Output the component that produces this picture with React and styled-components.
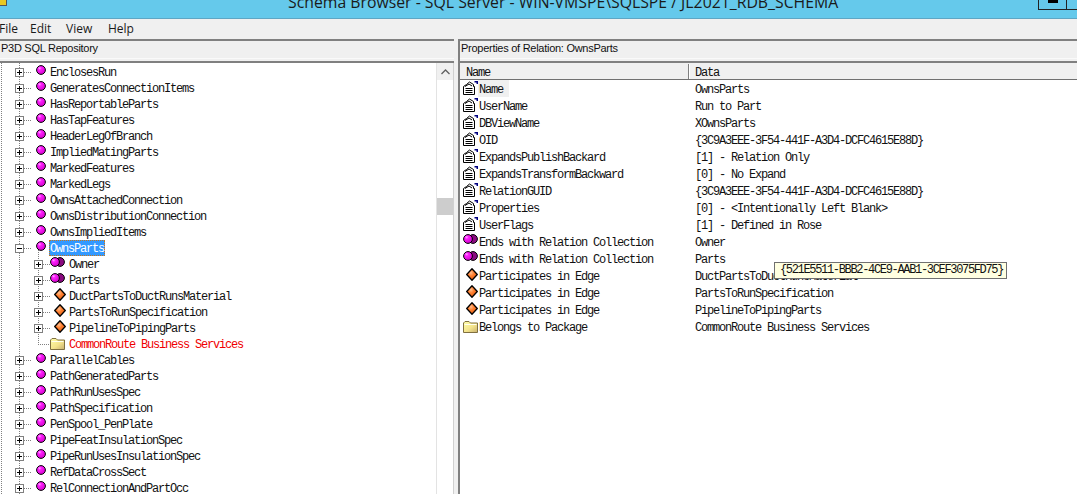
import styled, { createGlobalStyle } from 'styled-components'

const GlobalStyle = createGlobalStyle`
  html, body {
    margin: 0;
    padding: 0;
    background: #fff;
    overflow: hidden;
  }
`

const dotted = (x, height = '100%') =>
  `repeating-linear-gradient(#808080 0 1px, transparent 1px 2px) ${x}px 0 / 1px ${height} no-repeat`

const Window = styled.div`
  width: 1077px;
  height: 494px;
  display: flex;
  flex-direction: column;
  overflow: hidden;
  background: #f0f0f0;
  position: relative;
`
const TitleBar = styled.div`
  height: 18px;
  flex: none;
  background: #65c9eb;
  border-bottom: 1px solid #5fa6c4;
  display: flex;
  align-items: flex-start;
  overflow: hidden;
`
const AppIcon = styled.div`
  width: 6px;
  height: 5px;
  flex: none;
  background: #e8c820;
  border: 1px solid #555;
  border-left: none;
  border-top: none;
`
const Title = styled.div`
  margin: -8px 0 0 281px;
  font: 15.8px/20px "Open Sans", "Noto Sans", sans-serif;
  color: #1a1a1a;
  white-space: nowrap;
`
const WindowButtons = styled.div`
  display: flex;
  flex: none;
  margin-left: auto;
  height: 9px;
  border-left: 1px solid #222;
  border-bottom: 1px solid #222;
`
const WindowButton = styled.div`
  width: ${p => p.$w}px;
  box-sizing: border-box;
  border-right: ${p => (p.$last ? 'none' : '1px solid #222')};
  display: flex;
  justify-content: center;
  align-items: flex-start;
`
const MinimizeBar = styled.div`
  width: 10px;
  height: 3px;
  background: #000;
`
const MenuBar = styled.div`
  height: 20px;
  flex: none;
  display: flex;
  align-items: center;
  margin-left: -1px;
  font: 12px/20px "Open Sans", "Noto Sans", sans-serif;
  color: #1a1a1a;
`
const MenuItem = styled.span`
  width: ${p => p.$w}px;
  flex: none;
`
const Split = styled.div`
  flex: 1;
  min-height: 0;
  display: flex;
`
const Pane = styled.div`
  width: ${p => p.$w}px;
  flex: ${p => (p.$w ? 'none' : '1')};
  min-width: 0;
  display: flex;
  flex-direction: column;
  border-left: ${p => (p.$w ? 'none' : '2px solid #808080')};
`
const PaneCaption = styled.div`
  height: 17px;
  flex: none;
  border-top: 2px solid #808080;
  border-bottom: 1px solid #fafafa;
  font: 11px/15px "Liberation Sans", Arial, sans-serif;
  letter-spacing: -0.27px;
  color: #111;
  padding-left: 1px;
  white-space: nowrap;
  overflow: hidden;
`
const PaneBody = styled.div`
  flex: 1;
  min-height: 0;
  margin-top: 2px;
  border-top: 2px solid #808080;
  background: #fff;
  display: flex;
  overflow: hidden;
`
const Tree = styled.div`
  flex: 1;
  min-width: 0;
  padding-top: 1px;
  background: ${dotted(1)}, ${dotted(19)}, #fff;
  overflow: hidden;
`
const Mono = styled.span`
  height: 16px;
  font: 12px/18px "Liberation Mono", "DejaVu Sans Mono", monospace;
  letter-spacing: -1.2px;
  white-space: nowrap;
`
const Row = styled.div`
  height: 16px;
  display: flex;
  align-items: center;
  padding-left: ${p => (p.$level ? 34 : 15)}px;
  color: #111;
`
const Box = styled.div`
  width: 9px;
  height: 9px;
  flex: none;
  box-sizing: border-box;
  border: 1px solid #808080;
  background: #fff;
  position: relative;
  &::before {
    content: "";
    position: absolute;
    left: 1px;
    top: 3px;
    width: 5px;
    height: 1px;
    background: #000;
  }
  &::after {
    content: "";
    display: ${p => (p.$open ? 'none' : 'block')};
    position: absolute;
    left: 3px;
    top: 1px;
    width: 1px;
    height: 5px;
    background: #000;
  }
`
const Stub = styled.div`
  width: ${p => p.$w}px;
  margin-left: ${p => p.$skip || 0}px;
  height: 1px;
  flex: none;
  background: repeating-linear-gradient(90deg, #808080 0 1px, transparent 1px 2px);
`
const IconSlot = styled.div`
  width: ${p => p.$w}px;
  height: 16px;
  flex: none;
  box-sizing: border-box;
  padding-top: ${p => p.$top || 0}px;
  display: flex;
  align-items: flex-start;
  justify-content: ${p => p.$align || 'center'};
  svg { display: block; }
`
const Label = styled(Mono)`
  margin-left: 1px;
  color: ${p => (p.$red ? '#f00000' : 'inherit')};
  ${p => p.$selected && `
    margin-left: 0;
    padding: 0 1px;
    background: #3399ff;
    color: #fff;
    outline: 1px dotted #c8761a;
    outline-offset: -1px;
  `}
`
const Children = styled.div`
  margin-top: -8px;
  padding-top: 8px;
  background: ${dotted(38, 'calc(100% - 8px)')};
`
const ScrollBar = styled.div`
  width: 16px;
  flex: none;
  border-left: 1px solid #e3e3e3;
  border-right: 1px solid #d0d0d0;
  background: #fff;
  display: flex;
  flex-direction: column;
`
const ScrollArrow = styled.div`
  height: 17px;
  flex: none;
  background: #f0f0f0;
  display: flex;
  justify-content: center;
  align-items: center;
`
const ScrollThumb = styled.div`
  height: 17px;
  flex: none;
  margin-top: 118px;
  background: #cdcdcd;
`
const Divider = styled.div`
  width: 4px;
  flex: none;
`
const List = styled.div`
  flex: 1;
  min-width: 0;
  display: flex;
  flex-direction: column;
  background: #fff;
`
const ListHead = styled.div`
  height: 15px;
  flex: none;
  display: flex;
  background: #f0f0f0;
  border-bottom: 1px solid #707070;
  padding: 1px 0 0 2px;
`
const HeadCell = styled(Mono)`
  width: ${p => p.$w}px;
  height: 15px;
  flex: none;
  box-sizing: border-box;
  padding-left: ${p => p.$pad}px;
  color: #111;
  ${p => p.$rule && 'border-left: 1px solid #808080; box-shadow: inset 1px 0 0 #fff;'}
`
const PropRow = styled.div`
  height: 17px;
  display: flex;
  align-items: center;
  padding-left: 2px;
  color: #111;
`
const PropName = styled(Mono)`
  width: 217px;
  height: 17px;
  flex: none;
`
const PropNameText = styled.span`
  display: inline-block;
  height: 17px;
  line-height: 20px;
  background: ${p => (p.$hot ? '#f0f0f0' : 'transparent')};
  padding-right: ${p => (p.$hot ? 6 : 0)}px;
  padding-left: 1px;
`
const PropData = styled(Mono)`
  flex: 1;
  height: 17px;
  line-height: 20px;
`
const Tooltip = styled.div`
  position: absolute;
  left: 774px;
  top: 262px;
  height: 15px;
  padding: 0 3px 0 5px;
  border: 1px solid #707070;
  background: #ffffe1;
  font: 12px/15px "Liberation Mono", monospace;
  letter-spacing: -1.33px;
  color: #111;
  white-space: nowrap;
`

const Sphere = ({ id, cx = 5, cy = 5 }) => (
  <>
    <radialGradient id={id} cx="35%" cy="30%" r="75%">
      <stop offset="0" stopColor="#ffb0ff" />
      <stop offset="0.25" stopColor="#ff20ff" />
      <stop offset="1" stopColor="#d000c8" />
    </radialGradient>
    <circle cx={cx} cy={cy} r="4.4" fill={`url(#${id})`} stroke="#000" strokeWidth="1" />
  </>
)

const BallIcon = ({ id }) => (
  <svg width="10" height="10" viewBox="0 0 10 10">
    <Sphere id={id} />
  </svg>
)

const PairIcon = ({ id }) => (
  <svg width="15" height="10" viewBox="0 0 15 10">
    <circle cx="10" cy="5" r="4.4" fill="#8a0a80" stroke="#000" />
    <Sphere id={id} />
  </svg>
)

const EdgeIcon = ({ id }) => (
  <svg width="12" height="13" viewBox="0 0 12 13">
    <radialGradient id={id} cx="40%" cy="35%" r="70%">
      <stop offset="0" stopColor="#ffc090" />
      <stop offset="0.4" stopColor="#ff8030" />
      <stop offset="1" stopColor="#e05810" />
    </radialGradient>
    <path d="M6 .8 11.300 6.500 6 12.200.7 6.500Z" fill={`url(#${id})`} stroke="#000" strokeWidth="1.300" strokeLinejoin="round" />
  </svg>
)

const FolderIcon = ({ id }) => (
  <svg width="15" height="12" viewBox="0 0 15 12">
    <linearGradient id={id} x1="0" y1="0" x2="1" y2="1">
      <stop offset="0" stopColor="#ffffa8" />
      <stop offset="0.55" stopColor="#f4e48c" />
      <stop offset="1" stopColor="#c8b070" />
    </linearGradient>
    <path d="M.5 11.500V2L2 .5h4L7.500 2h7v9.500Z" fill={`url(#${id})`} stroke="#807040" />
    <path d="M1.500 3.500h12" stroke="#fffff0" />
  </svg>
)

const SheetIcon = () => (
  <svg width="16" height="14" viewBox="0 0 16 14">
    <path d="M1.500 13.500v-8l3-2 3-2.500 4 2.500v2h1v8Z" fill="#fff" stroke="#000" />
    <path d="M3 5.500 7 3l3 2M3.500 7.500h7M3.500 9.500h7M3.500 11.500h7" fill="none" stroke="#000" />
    <path d="M12.500 0H16v3h-1.500V1.500h-2Z" fill="#000080" />
  </svg>
)

const topNodes = [
  'EnclosesRun', 'GeneratesConnectionItems', 'HasReportableParts', 'HasTapFeatures',
  'HeaderLegOfBranch', 'ImpliedMatingParts', 'MarkedFeatures', 'MarkedLegs',
  'OwnsAttachedConnection', 'OwnsDistributionConnection', 'OwnsImpliedItems',
]
const bottomNodes = [
  'ParallelCables', 'PathGeneratedParts', 'PathRunUsesSpec', 'PathSpecification',
  'PenSpool_PenPlate', 'PipeFeatInsulationSpec', 'PipeRunUsesInsulationSpec',
  'RefDataCrossSect', 'RelConnectionAndPartOcc',
]
const edges = ['DuctPartsToDuctRunsMaterial', 'PartsToRunSpecification', 'PipelineToPipingParts']

const properties = [
  ['sheet', 'Name', 'OwnsParts'],
  ['sheet', 'UserName', 'Run to Part'],
  ['sheet', 'DBViewName', 'XOwnsParts'],
  ['sheet', 'OID', '{3C9A3EEE-3F54-441F-A3D4-DCFC4615E88D}'],
  ['sheet', 'ExpandsPublishBackard', '[1] - Relation Only'],
  ['sheet', 'ExpandsTransformBackward', '[0] - No Expand'],
  ['sheet', 'RelationGUID', '{3C9A3EEE-3F54-441F-A3D4-DCFC4615E88D}'],
  ['sheet', 'Properties', '[0] - <Intentionally Left Blank>'],
  ['sheet', 'UserFlags', '[1] - Defined in Rose'],
  ['pair', 'Ends with Relation Collection', 'Owner'],
  ['pair', 'Ends with Relation Collection', 'Parts'],
  ['edge', 'Participates in Edge', 'DuctPartsToDuctRunsMaterial'],
  ['edge', 'Participates in Edge', 'PartsToRunSpecification'],
  ['edge', 'Participates in Edge', 'PipelineToPipingParts'],
  ['folder', 'Belongs to Package', 'CommonRoute Business Services'],
]

const TopRow = ({ name, id }) => (
  <Row>
    <Box />
    <Stub $w={8} />
    <IconSlot $w={17} $top={1}><BallIcon id={id} /></IconSlot>
    <Label>{name}</Label>
  </Row>
)

const PropIcon = ({ kind, id }) => {
  if (kind === 'pair') return <IconSlot $w={16}><PairIcon id={id} /></IconSlot>
  if (kind === 'edge') return <IconSlot $w={16} $align="flex-end"><EdgeIcon id={id} /></IconSlot>
  if (kind === 'folder') return <IconSlot $w={16} $align="flex-end" $top={2}><FolderIcon id={id} /></IconSlot>
  return <IconSlot $w={16}><SheetIcon /></IconSlot>
}

const App = () => (
  <Window>
    <GlobalStyle />
    <TitleBar>
      <AppIcon />
      <Title>Schema Browser - SQL Server - WIN-VMSPE\SQLSPE / JL2021_RDB_SCHEMA</Title>
      <WindowButtons>
        <WindowButton $w={28}><MinimizeBar /></WindowButton>
        <WindowButton $w={10} $last />
      </WindowButtons>
    </TitleBar>
    <MenuBar>
      <MenuItem $w={31}>File</MenuItem>
      <MenuItem $w={36}>Edit</MenuItem>
      <MenuItem $w={42}>View</MenuItem>
      <MenuItem $w={30}>Help</MenuItem>
    </MenuBar>
    <Split>
      <Pane $w={454}>
        <PaneCaption>P3D SQL Repository</PaneCaption>
        <PaneBody>
          <Tree>
            {topNodes.map((name, i) => <TopRow key={name} name={name} id={`top${i}`} />)}
            <Row>
              <Box $open />
              <Stub $w={8} />
              <IconSlot $w={17} $top={1}><BallIcon id="open" /></IconSlot>
              <Label $selected>OwnsParts</Label>
            </Row>
            <Children>
              {['Owner', 'Parts'].map(name => (
                <Row key={name} $level={1}>
                  <Box />
                  <Stub $w={7} />
                  <IconSlot $w={18} $align="flex-start" $top={1}><PairIcon id={`end${name}`} /></IconSlot>
                  <Label>{name}</Label>
                </Row>
              ))}
              {edges.map((name, i) => (
                <Row key={name} $level={1}>
                  <Box />
                  <Stub $w={8} />
                  <IconSlot $w={17}><EdgeIcon id={`edge${i}`} /></IconSlot>
                  <Label>{name}</Label>
                </Row>
              ))}
              <Row $level={1}>
                <Stub $w={12} $skip={4} />
                <IconSlot $w={18} $align="flex-start" $top={2}><FolderIcon id="pkg" /></IconSlot>
                <Label $red>CommonRoute Business Services</Label>
              </Row>
            </Children>
            {bottomNodes.map((name, i) => <TopRow key={name} name={name} id={`bot${i}`} />)}
          </Tree>
          <ScrollBar>
            <ScrollArrow>
              <svg width="9" height="6" viewBox="0 0 9 6">
                <path d="M.5 5 4.500 1l4 4" fill="none" stroke="#606060" strokeWidth="1.300" />
              </svg>
            </ScrollArrow>
            <ScrollThumb />
          </ScrollBar>
        </PaneBody>
      </Pane>
      <Divider />
      <Pane>
        <PaneCaption>Properties of Relation: OwnsParts</PaneCaption>
        <PaneBody>
          <List>
            <ListHead>
              <HeadCell $w={226} $pad={4}>Name</HeadCell>
              <HeadCell $w={300} $pad={6} $rule>Data</HeadCell>
            </ListHead>
            {properties.map(([kind, name, data], i) => (
              <PropRow key={i}>
                <PropIcon kind={kind} id={`prop${i}`} />
                <PropName>
                  <PropNameText $hot={i === 0}>{name}</PropNameText>
                </PropName>
                <PropData>{data}</PropData>
              </PropRow>
            ))}
          </List>
        </PaneBody>
      </Pane>
    </Split>
    <Tooltip>{'{521E5511-BBB2-4CE9-AAB1-3CEF3075FD75}'}</Tooltip>
  </Window>
)

export default App
